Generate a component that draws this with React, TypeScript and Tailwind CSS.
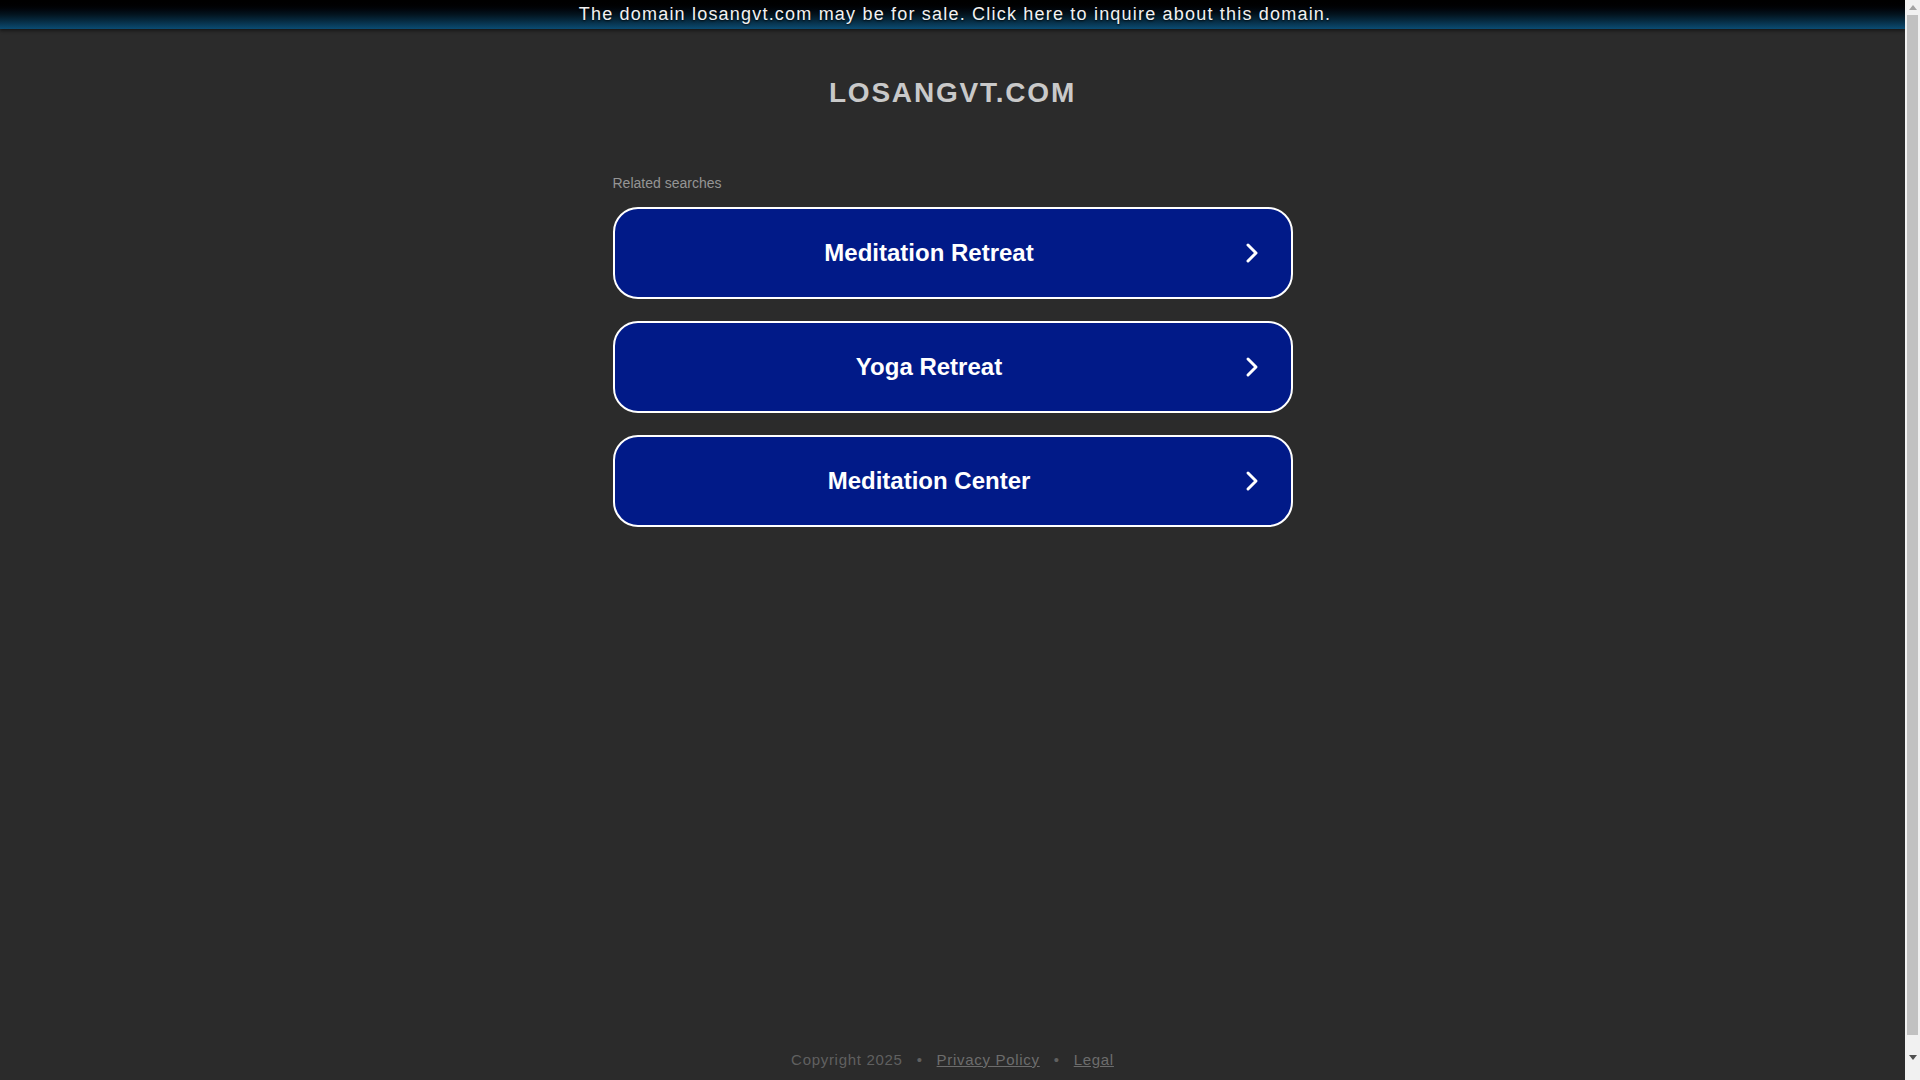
import React from "react";

function Chevron() {
  return (
    <svg width="14" height="22" viewBox="0 0 14 22" fill="none" className="shrink-0 mr-[32px]">
      <path d="M3 3 L11 11 L3 19" stroke="#ffffff" strokeWidth="3" strokeLinecap="round" strokeLinejoin="round" />
    </svg>
  );
}

function SearchButton({ label }: { label: string }) {
  return (
    <a
      href="#"
      className="flex items-center h-[92px] w-full border-2 border-white rounded-[25px] bg-[#011a88] text-white no-underline"
    >
      <span className="flex-1 text-center pr-[1px] text-[24px] font-bold leading-[28px]">{label}</span>
      <Chevron />
    </a>
  );
}

function Scrollbar() {
  return (
    <div className="w-[15px] h-[1080px] shrink-0 bg-[#f1f1f1] flex flex-col items-center">
      <div className="h-[15px] w-full flex items-center justify-center">
        <svg width="8" height="5" viewBox="0 0 8 5">
          <path d="M0 5 L4 0 L8 5 Z" fill="#a3a3a3" />
        </svg>
      </div>
      <div className="w-[11px] h-[1020px] bg-[#c1c1c1]" />
      <div className="flex-1 w-full flex items-center justify-center">
        <svg width="8" height="5" viewBox="0 0 8 5">
          <path d="M0 0 L8 0 L4 5 Z" fill="#505050" />
        </svg>
      </div>
    </div>
  );
}

export default function App() {
  const items = ["Meditation Retreat", "Yoga Retreat", "Meditation Center"];
  return (
    <div className="h-[1080px] overflow-hidden flex bg-[#2b2b2b] font-['Liberation_Sans','Arial',sans-serif]">
      <div className="flex-1 h-[1080px] overflow-hidden">
        <div className="min-h-[1112px] flex flex-col">
          <div className="h-[29px] pl-[5px] bg-linear-to-b from-[#000000] via-[#03141f] to-[#0b4c73] shadow-[0_2px_3px_rgba(0,0,0,0.45)] flex items-center justify-center">
            <a
              href="#"
              className="text-[18px] leading-[29px] tracking-[1.2px] text-[#f2f2f2] no-underline [text-shadow:0_1px_2px_rgba(0,0,0,0.8)]"
            >
              The domain losangvt.com may be for sale. Click here to inquire about this domain.
            </a>
          </div>

          <main className="flex-1 flex flex-col items-center">
            <h1 className="mt-[47px] h-[34px] text-[28px] leading-[34px] font-bold tracking-[1.8px] text-[#c9c9c9]">
              LOSANGVT.COM
            </h1>

            <div className="mt-[65px] w-[680px] flex flex-col">
              <div className="h-[16px] text-[14px] leading-[16px] text-[#959595]">Related searches</div>
              <div className="mt-[16px] flex flex-col gap-[22px]">
                {items.map((t) => (
                  <SearchButton key={t} label={t} />
                ))}
              </div>
            </div>
          </main>

          <footer className="pb-[42px] flex justify-center items-center h-[62px] text-[15px] leading-[20px] tracking-[0.7px]">
            <span className="text-[#606060]">Copyright 2025</span>
            <span className="text-[#606060] mx-[14px]">•</span>
            <a href="#" className="text-[#6d6d6d] underline">Privacy Policy</a>
            <span className="text-[#606060] mx-[14px]">•</span>
            <a href="#" className="text-[#6d6d6d] underline">Legal</a>
          </footer>
        </div>
      </div>
      <Scrollbar />
    </div>
  );
}
